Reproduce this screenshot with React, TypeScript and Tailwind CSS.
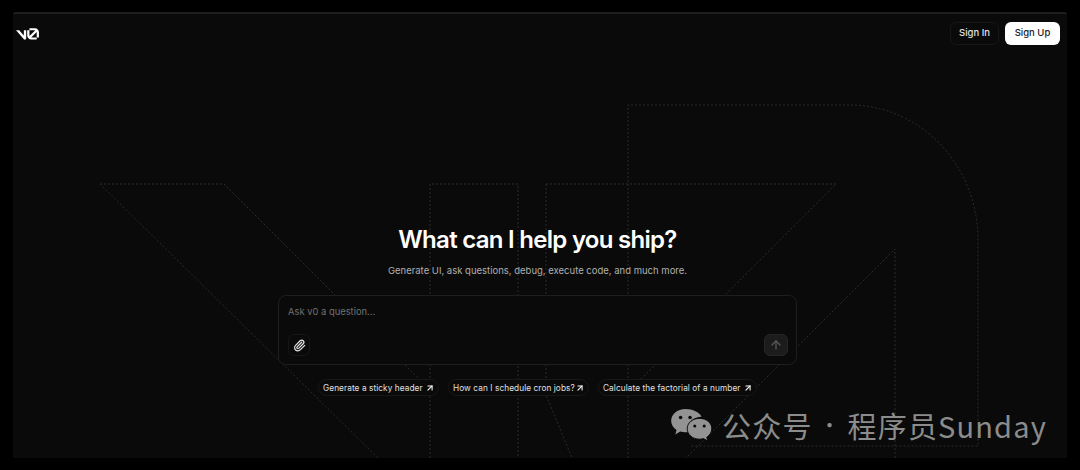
import { ArrowUp, ArrowUpRight, Paperclip } from 'lucide-react';

const suggestions = [
    { label: 'Generate a sticky header', width: 'w-[121px]' },
    { label: 'How can I schedule cron jobs?', width: 'w-[141px]' },
    { label: 'Calculate the factorial of a number', width: 'w-[159px]' },
];

function Logo() {
    return (
        <svg viewBox="0 0 40 20" fill="white" className="w-[23px] h-[12px]">
            <path d="M23.3919 0H32.9188C36.7819 0 39.9136 3.13165 39.9136 6.99475V16.0805H36.0006V6.99475C36.0006 6.90167 35.9969 6.80925 35.9898 6.71766L26.4628 16.079C26.4949 16.08 26.5272 16.0805 26.5595 16.0805H36.0006V19.7762H26.5595C22.6964 19.7762 19.4788 16.6139 19.4788 12.7508V3.68923H23.3919V12.7508C23.3919 12.9253 23.4054 13.0977 23.4316 13.2668L33.1682 3.6995C33.0861 3.6927 33.003 3.68923 32.9188 3.68923H23.3919V0Z" />
            <path d="M13.7688 19.0956L0 3.68759H5.53933L13.6231 12.7337V3.68759H17.7535V17.5746C17.7535 19.6705 15.1654 20.6584 13.7688 19.0956Z" />
        </svg>
    );
}

function BackgroundLines() {
    return (
        <svg
            viewBox="13 14 1054 444"
            fill="none"
            stroke="#2b2b2b"
            strokeWidth="1"
            strokeDasharray="2 2"
            className="absolute inset-0 w-full h-full"
        >
            <path d="M100 184H224L432 392" />
            <path d="M100 184L378 458" />
            <path d="M430 458V184H518V458" />
            <path d="M546 184V395L572 458" />
            <path d="M546 184H836L630 390" />
            <path d="M628 458V105H850C920 105 978 165 978 240V446H690" />
            <path d="M895 458V249L686 458" />
        </svg>
    );
}

function WeChatIcon() {
    return (
        <svg viewBox="0 0 44 36" className="w-[42px] h-[34px]">
            <path d="M16 1C7.5 1 1 6.7 1 13.6c0 4 2.2 7.4 5.7 9.8L5.4 28l5.2-3c1.7.5 3.5.8 5.4.8 1 0 2-.1 3-.3-.4-1.200-.6-2.400-.6-3.700 0-7.200 6.800-12.600 14.800-12.600C30.700 4.300 24 1 16 1z" fill="#939393" />
            <path d="M31 11C23.400 11 18 15.900 18 21.900S23.400 33 31 33c1.500 0 2.900-.2 4.300-.6L39.800 35l-1.100-4C41.900 28.800 44 25.600 44 21.900 44 15.900 38.600 11 31 11z" fill="#939393" stroke="#0a0a0a" strokeWidth="1" />
            <circle cx="11" cy="10" r="1.900" fill="#0a0a0a" />
            <circle cx="21" cy="10" r="1.900" fill="#0a0a0a" />
            <circle cx="26" cy="19" r="1.600" fill="#0a0a0a" />
            <circle cx="36" cy="19" r="1.600" fill="#0a0a0a" />
        </svg>
    );
}

export default function App() {
    return (
        <div className="w-[1080px] h-[470px] bg-black pt-3 pb-3 px-[13px] overflow-hidden font-['Inter',sans-serif]">
            <div className="relative h-full bg-[#0a0a0a] border-t-2 border-[#1f1f1f] rounded-t-[3px] overflow-hidden">
                <BackgroundLines />

                <header className="relative flex items-center justify-between pl-[3px] pr-[7px] pt-[8px]">
                    <Logo />
                    <div className="flex items-center gap-[6px]">
                        <button className="h-[23px] w-[49px] rounded-md border border-[#161616] text-[9.5px] font-medium text-[#e0e0e0]">
                            Sign In
                        </button>
                        <button className="h-[23px] w-[55px] rounded-md bg-white text-[9.5px] font-medium text-[#222]">
                            Sign Up
                        </button>
                    </div>
                </header>

                <main className="relative flex flex-col items-center mt-[179px] pr-[5px]">
                    <h1 className="text-[24px] leading-[32px] font-semibold tracking-[-0.03em] text-white">
                        What can I help you ship?
                    </h1>
                    <p className="mt-[7px] text-[9.5px] leading-[16px] text-[#b0b0b0]">
                        Generate UI, ask questions, debug, execute code, and much more.
                    </p>

                    <div className="mt-[16px] w-[519px] h-[70px] flex flex-col justify-between rounded-lg border border-[#1e1e1e] bg-[#0a0a0a] pl-[9px] pr-[8px] pt-[8px] pb-[8px]">
                        <div className="text-[9.4px] leading-[16px] text-[#707070]">Ask v0 a question...</div>
                        <div className="flex items-center justify-between">
                            <button className="flex items-center justify-center w-[22px] h-[22px] rounded-md border border-[#161616]">
                                <Paperclip className="w-[13px] h-[13px] text-[#e5e5e5]" strokeWidth={2.2} />
                            </button>
                            <button className="flex items-center justify-center w-[24px] h-[22px] rounded-md bg-[#1c1c1c] border border-[#262626]">
                                <ArrowUp className="w-[14px] h-[14px] text-[#5f5f5f]" strokeWidth={2} />
                            </button>
                        </div>
                    </div>

                    <div className="mt-[14px] flex items-center gap-[9px]">
                        {suggestions.map((item) => (
                            <div
                                key={item.label}
                                className={`flex items-center justify-between h-[17px] pl-[4px] pr-[3px] rounded-full border border-[#181818] bg-[#0a0a0a] ${item.width}`}
                            >
                                <span className="text-[8.25px] leading-[12px] tracking-[0.01em] text-[#e0e0e0] whitespace-nowrap">
                                    {item.label}
                                </span>
                                <ArrowUpRight className="w-[10px] h-[10px] text-white" strokeWidth={2.5} />
                            </div>
                        ))}
                    </div>
                </main>

                <div className="absolute right-[20px] bottom-[15px] flex items-center gap-[10px]">
                    <WeChatIcon />
                    <div className="flex items-center text-[29px] leading-[36px] tracking-[0.04em] text-[#8c8c8c] font-['Noto_Sans_CJK_SC','Noto_Sans',sans-serif]">
                        <span>公众号</span>
                        <span className="w-[35px] text-center text-[20px]">·</span>
                        <span>程序员Sunday</span>
                    </div>
                </div>
            </div>
        </div>
    );
}
